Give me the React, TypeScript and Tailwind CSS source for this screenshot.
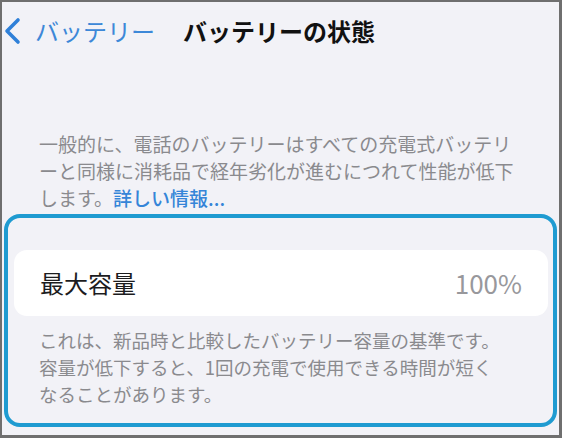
const jp = { fontFamily: '"Noto Sans CJK JP", "Noto Sans", sans-serif' }

function BackChevron() {
  return (
    <svg width="20" height="30" viewBox="0 0 20 30" className="shrink-0">
      <path d="M16 4 L5 15 L16 26" fill="none" stroke="#2f80d8" strokeWidth="3.6" strokeLinecap="round" strokeLinejoin="round" />
    </svg>
  )
}

export default function App() {
  return (
    <div className="w-[562px] h-[438px] bg-[#6f6f6f] pt-[2px] pl-[2px] pr-[3px] pb-[3px]" style={jp}>
      <div className="w-full h-full bg-[#f2f2f7] flex flex-col">
        {/* nav bar */}
        <div className="h-[58px] flex items-center">
          <BackChevron />
          <span className="ml-[13px] text-[24px] leading-none text-[#3d88d8]">バッテリー</span>
          <span className="ml-[28px] text-[24px] leading-none font-bold text-[#111]">バッテリーの状態</span>
        </div>

        <div className="mt-[70px] pl-[37px] text-[19px] leading-[27px] text-[#8a8a8e] whitespace-nowrap">
          <div>一般的に、電話のバッテリーはすべての充電式バッテリ</div>
          <div>ーと同様に消耗品で経年劣化が進むにつれて性能が低下</div>
          <div>
            します。<span className="text-[#3585d8] font-medium">詳しい情報...</span>
          </div>
        </div>

        <div className="mt-[3px] mx-[2px] h-[213px] border-4 border-[#1f9bd1] rounded-[16px] pt-[32px]">
          <div className="ml-[6px] mr-[5px] h-[66px] bg-white rounded-[13px] flex items-center justify-between pl-[26px] pr-[26px]">
            <span className="text-[24px] leading-none text-[#1c1c1e]">最大容量</span>
            <span className="text-[26px] leading-none text-[#98989c]">100%</span>
          </div>
          <div className="mt-[11px] pl-[31px] text-[18.5px] leading-[27px] text-[#8a8a8e] whitespace-nowrap">
            <div>これは、新品時と比較したバッテリー容量の基準です。</div>
            <div>容量が低下すると、1回の充電で使用できる時間が短く</div>
            <div>なることがあります。</div>
          </div>
        </div>
      </div>
    </div>
  )
}
